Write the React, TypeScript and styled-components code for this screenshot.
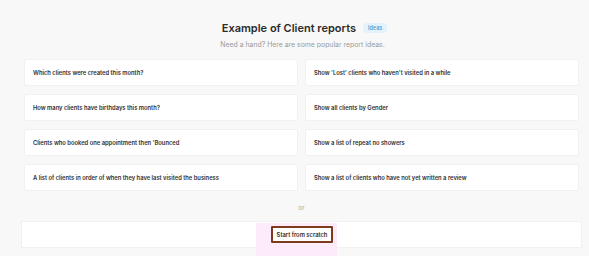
import React from "react";
import styled, { createGlobalStyle } from "styled-components";

const Global = createGlobalStyle`
  html, body { margin: 0; padding: 0; background: #f8f8f8; }
  body { font-family: Inter, "Noto Sans", sans-serif; color: #2b2b2b; }
  * { box-sizing: border-box; }
`;

const Page = styled.div`
  width: 589px;
  height: 256px;
  overflow: hidden;
  display: flex;
  flex-direction: column;
  align-items: center;
  padding: 20px 7px 0 21px;
`;

const Header = styled.div`
  display: flex;
  flex-direction: column;
  align-items: center;
  gap: 4px;
  padding-left: 2px;
`;

const TitleRow = styled.div`
  display: flex;
  align-items: center;
  gap: 7px;
  padding-left: 4px;
`;

const Title = styled.h1`
  margin: 0;
  font-size: 11px;
  line-height: 16px;
  font-weight: 600;
  color: #2b2b2b;
`;

const Badge = styled.span`
  font-size: 5.5px;
  line-height: 10px;
  padding: 0 5px;
  border-radius: 3px;
  background: #e4f3fb;
  color: #4a9bd0;
  font-weight: 500;
`;

const Subtitle = styled.p`
  margin: 0;
  font-size: 6.9px;
  line-height: 10px;
  color: #9a9a9a;
`;

const Grid = styled.div`
  align-self: stretch;
  margin: 9px 3px 0 3px;
  display: grid;
  grid-template-columns: 1fr 1fr;
  column-gap: 7px;
  row-gap: 8px;
`;

const Card = styled.div`
  height: 27px;
  background: #ffffff;
  border: 1px solid #f1f1f1;
  border-radius: 2px;
  display: flex;
  align-items: center;
  padding-left: 8px;
  font-size: 5.8px;
  font-weight: 600;
  color: #2e2e2e;
  white-space: nowrap;
`;

const Or = styled.div`
  margin-top: 12px;
  font-size: 6.5px;
  line-height: 10px;
  color: #a8a8a8;
`;

const Footer = styled.div`
  align-self: stretch;
  margin-top: 8px;
  height: 27px;
  background: #ffffff;
  border: 1px solid #f1f1f1;
  display: flex;
  justify-content: center;
`;

const Highlight = styled.div`
  display: flex;
  justify-content: flex-start;
  align-items: flex-start;
  width: 81px;
  height: 34px;
  margin-top: 1px;
  margin-right: 10px;
  padding: 3px 0 0 15px;
  background: #fdebfa;
`;

const Button = styled.button`
  height: 17px;
  width: 62px;
  padding: 0;
  background: #ffffff;
  border: 2px solid #7b3b1c;
  border-radius: 1px;
  font-family: inherit;
  font-size: 5.8px;
  font-weight: 600;
  color: #2e2e2e;
  white-space: nowrap;
  cursor: pointer;
`;

const ideas = [
  "Which clients were created this month?",
  "Show 'Lost' clients who haven't visited in a while",
  "How many clients have birthdays this month?",
  "Show all clients by Gender",
  "Clients who booked one appointment then 'Bounced",
  "Show a list of repeat no showers",
  "A list of clients in order of when they have last visited the business",
  "Show a list of clients who have not yet written a review",
];

export default function App() {
  return (
    <>
      <Global />
      <Page>
        <Header>
          <TitleRow>
            <Title>Example of Client reports</Title>
            <Badge>Ideas</Badge>
          </TitleRow>
          <Subtitle>Need a hand? Here are some popular report ideas.</Subtitle>
        </Header>
        <Grid>
          {ideas.map((t) => (
            <Card key={t}>{t}</Card>
          ))}
        </Grid>
        <Or>or</Or>
        <Footer>
          <Highlight>
            <Button>Start from scratch</Button>
          </Highlight>
        </Footer>
      </Page>
    </>
  );
}
